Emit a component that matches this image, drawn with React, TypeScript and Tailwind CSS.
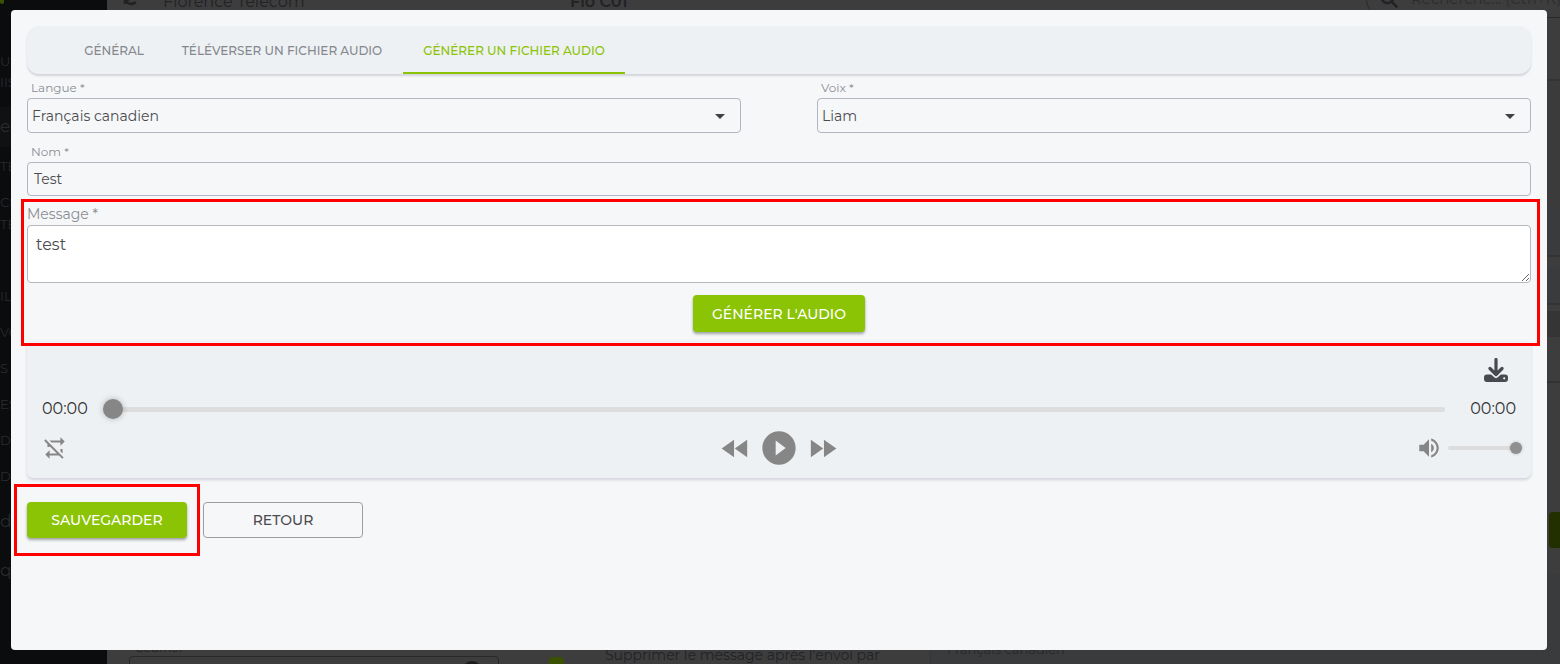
import React from "react";

const ICONS = {
  caret: "M7,10L12,15L17,10H7Z",
  repeatOff:
    "M2,5.27L3.28,4L20,20.72L18.73,22L15.73,19H7V22L3,18L7,14V17H13.73L7,10.27V11H5V8.27L2,5.27M17,13H19V17.18L17,15.18V13M17,5V2L21,6L17,10V7H8.82L6.82,5H17Z",
  rewind: "M11.5,12L20,18V6M11,18V6L2.5,12L11,18Z",
  forward: "M13,6V18L21.5,12M4,18L12.5,12L4,6V18Z",
  play: "M10,16.5V7.5L16,12M12,2A10,10 0 0,0 2,12A10,10 0 0,0 12,22A10,10 0 0,0 22,12C22,6.47 17.5,2 12,2Z",
  volume:
    "M14,3.23V5.29C16.89,6.15 19,8.83 19,12C19,15.17 16.89,17.84 14,18.7V20.77C18,19.86 21,16.28 21,12C21,7.72 18,4.14 14,3.23M16.5,12C16.5,10.23 15.5,8.71 14,7.97V16C15.5,15.29 16.5,13.76 16.5,12M3,9V15H7L12,20V4L7,9H3Z",
};

function Icon({ path, className }: { path: string; className: string }) {
  return (
    <svg viewBox="0 0 24 24" fill="currentColor" aria-hidden="true" className={className}>
      <path d={path} />
    </svg>
  );
}

function DownloadIcon() {
  return (
    <svg viewBox="0 0 24 24" aria-hidden="true" className="size-6">
      <path d="M12 1.5V16M6 10.5l6 6 6-6" fill="none" stroke="currentColor" strokeWidth="3.2" strokeLinecap="round" strokeLinejoin="round" />
      <path
        fillRule="evenodd"
        fill="currentColor"
        d="M3 16.6h4.2l2.7 2.5a3 3 0 0 0 4.2 0l2.7-2.5H21a3 3 0 0 1 3 3V21a3 3 0 0 1-3 3H3a3 3 0 0 1-3-3v-1.400a3 3 0 0 1 3-3ZM20.200 19.200a1.100 1.100 0 1 0 0 2.200a1.100 1.100 0 0 0 0-2.200Z"
      />
    </svg>
  );
}

const LABEL = "block h-5 px-1 text-xs leading-5 text-[#8b8d93]";

function SelectField({ id, label, value }: { id: string; label: string; value: string }) {
  return (
    <div>
      <label htmlFor={id} className={LABEL}>
        {label}
      </label>
      <div className="relative">
        <select
          id={id}
          defaultValue={value}
          className="block h-[35px] w-full appearance-none rounded border border-[#b4b5c2] bg-transparent pr-10 pl-1 text-sm text-[#4a4b4e]"
        >
          <option>{value}</option>
        </select>
        <Icon path={ICONS.caret} className="pointer-events-none absolute top-1.5 right-[9px] size-6 text-[#3f4144]" />
      </div>
    </div>
  );
}

const MENU = [
  { text: "U", style: "h-[18px] text-[13px]" },
  { text: "IIS", style: "h-6 text-[13px]" },
  { text: "eu", style: "mt-3 h-10 bg-[#0f1113] text-[17px]" },
  { text: "TE", style: "h-10 text-[13px]" },
  { text: "CE", style: "h-8 text-[13px]" },
  { text: "TE", style: "mb-12 h-3 text-[13px]" },
  { text: "IL", style: "h-9 text-[13px]" },
  { text: "VO", style: "h-9 text-[13px]" },
  { text: "S", style: "h-9 text-[13px]" },
  { text: "ES", style: "h-9 text-[13px]" },
  { text: "DI", style: "h-9 text-[13px]" },
  { text: "D'", style: "h-9 text-[13px]" },
  { text: "d", style: "h-[54px] text-[17px]" },
  { text: "qu", style: "h-11 text-[17px]" },
];

const BANDS = [
  "h-[17px]",
  "h-[62px] border-t border-[#2e2e2e]",
  "h-[128px] border-t-2 border-[#343434] bg-[#3b3b3b]",
  "h-[50px] border-b-2 border-[#323334] bg-[#3a3b3d]",
  "mt-2.5 h-[38px] border-b-2 border-[#323334] bg-[#3a3b3d]",
  "mt-1.5 h-[26px] bg-[#353535]",
  "h-[46px] border-b-2 border-[#323232]",
];

function Backdrop() {
  return (
    <div aria-hidden="true" className="flex h-full overflow-hidden bg-[#3d3d3d] text-[#212226]">
      <div className="w-[107px] shrink-0 bg-[#0a0c0e] text-[#292b2d]">
        <div className="h-[53px]">
          <span className="block h-1 w-1 rounded-b-full bg-[#3a5200]" />
        </div>
        {MENU.map((m, i) => (
          <div key={i} className={`flex items-center ${m.style}`}>
            {m.text}
          </div>
        ))}
      </div>
      <div className="relative flex min-w-0 flex-1 flex-col justify-between">
        <div className="absolute top-0 right-0 w-[13px]">
          {BANDS.map((band, i) => (
            <div key={i} className={band} />
          ))}
        </div>
        <div className="relative h-10">
          <svg viewBox="0 0 24 24" className="absolute -top-2.5 left-4 size-4" fill="none" stroke="currentColor" strokeWidth="4">
            <path d="M21 3v7h-7M3 21v-7h7M20 9A9 9 0 0 0 5 6M4 15a9 9 0 0 0 15 3" />
          </svg>
          <span className="absolute -top-2.5 left-14 text-base leading-6">Florence Télécom</span>
          <span className="absolute -top-2.5 left-[463px] text-base leading-6 font-semibold">Flo C01</span>
          <div className="absolute -top-5 -right-4 flex h-[38px] w-[210px] items-center gap-3 rounded-[19px] border border-[#2a2a2a] pl-3 text-[15px]">
            <svg viewBox="0 0 24 24" className="size-5 shrink-0" fill="none" stroke="currentColor" strokeWidth="3">
              <circle cx="10" cy="10" r="7" />
              <path d="M15 15l7 7" />
            </svg>
            <span className="whitespace-nowrap text-[#2b2c2f]">Recherche... (Ctrl+K)</span>
          </div>
        </div>
        <div className="relative h-[152px]">
          <div className="absolute top-0 right-0 h-9 w-[11px] rounded-l bg-[#223000]" />
          <div className="absolute right-0 bottom-0 h-[90px] w-[630px] border-l border-[#353535] bg-[#3a3b3d]" />
          <span className="absolute bottom-2 left-7 text-xs">Courriel</span>
          <div className="absolute -bottom-6 left-[22px] flex h-8 w-[370px] justify-end rounded border border-[#292929] pr-4">
            <span className="mt-1 size-5 rounded-full bg-[#1d1d1d]" />
          </div>
          <span className="absolute -bottom-2 left-[442px] size-[15px] rounded-sm bg-[#3a5200]" />
          <span className="absolute -bottom-px left-[498px] text-sm leading-5 whitespace-nowrap">
            Supprimer le message après l'envoi par
          </span>
          <span className="absolute bottom-[5px] left-[840px] text-[13px] leading-5 text-[#27282b]">Français canadien</span>
        </div>
      </div>
    </div>
  );
}

const GREEN_BUTTON =
  "rounded bg-[#8bc305] text-sm font-medium text-white shadow-[0_2px_3px_rgba(0,0,0,0.35)]";

const RANGE =
  "min-w-0 cursor-pointer appearance-none rounded-full bg-[#dddddd] [&::-webkit-slider-thumb]:appearance-none [&::-webkit-slider-thumb]:rounded-full";

export default function App() {
  return (
    <div className="relative h-screen overflow-hidden font-['Montserrat','Inter',sans-serif]">
      <Backdrop />
      <div className="absolute inset-0 flex pt-2.5 pr-[13px] pb-3.5 pl-[11px]">
        <main role="dialog" aria-label="Générer un fichier audio" className="min-w-0 flex-1 rounded bg-[#f6f7f9] p-4">
          <div role="tablist" className="flex h-12 rounded-xl bg-[#edf1f4] pl-10 text-xs font-medium text-[#85888c] shadow-[0_2px_2px_rgba(40,40,80,0.17)]">
            <button role="tab" aria-selected="false" className="w-[94px] border-b-2 border-transparent pt-1">GÉNÉRAL</button>
            <button role="tab" aria-selected="false" className="w-[242px] border-b-2 border-transparent pt-1">TÉLÉVERSER UN FICHIER AUDIO</button>
            <button role="tab" aria-selected="true" className="w-[222px] border-b-2 border-[#8bc305] pt-1 text-[#8bc305]">
              GÉNÉRER UN FICHIER AUDIO
            </button>
          </div>

          <div className="mt-1 grid grid-cols-2 gap-[76px]">
            <SelectField id="langue" label="Langue *" value="Français canadien" />
            <SelectField id="voix" label="Voix *" value="Liam" />
          </div>

          <label htmlFor="nom" className={`mt-[9px] ${LABEL}`}>
            Nom *
          </label>
          <input id="nom" defaultValue="Test" className="block h-[34px] w-full rounded border border-[#b4b5c2] bg-transparent px-1.5 text-sm text-[#4a4b4e]" />

          <section className="relative">
            <label htmlFor="message" className="block pt-2 pb-px text-sm leading-5 text-[#8b8d93]">
              Message *
            </label>
            <textarea id="message" defaultValue="test" className="block h-[58px] w-full resize rounded border border-[#b7b8bc] bg-white px-2 py-[7px] text-base text-[#4a4b4e]" />
            <div className="flex justify-center pt-3 pb-2">
              <button className={`h-[37px] w-[172px] ${GREEN_BUTTON}`}>GÉNÉRER L'AUDIO</button>
            </div>
            <div className="pointer-events-none absolute top-[3px] -right-[9px] -bottom-[6px] -left-1.5 z-10 border-3 border-[#ff0000]" />
          </section>

          <section aria-label="Lecteur audio" className="rounded-md border-t-[5px] border-[#f2f5f7] bg-[#edf1f4] px-[15px] pt-[13px] pb-2.5 text-[#868686] shadow-[0_2px_3px_rgba(40,40,80,0.17)]">
            <div className="flex justify-end pr-2">
              <button aria-label="Télécharger" className="text-[#474a4e]">
                <DownloadIcon />
              </button>
            </div>
            <div className="mt-3.5 flex h-[26px] items-center text-base text-[#333333]">
              <span className="w-[61px]">00:00</span>
              <input
                type="range"
                aria-label="Position"
                defaultValue={0}
                className={`h-[5px] flex-1 [&::-webkit-slider-thumb]:size-5 [&::-webkit-slider-thumb]:bg-[#868686] [&::-webkit-slider-thumb]:shadow-[0_0_6px_rgba(0,0,0,0.25)] ${RANGE}`}
              />
              <span className="w-[71px] text-right">00:00</span>
            </div>
            <div className="mt-1.5 grid h-10 grid-cols-3 items-center">
              <button aria-label="Répéter" className="justify-self-start">
                <Icon path={ICONS.repeatOff} className="size-[26px]" />
              </button>
              <div className="flex items-center justify-center gap-1.5">
                <button aria-label="Reculer"><Icon path={ICONS.rewind} className="size-[35px]" /></button>
                <button aria-label="Lire"><Icon path={ICONS.play} className="size-10" /></button>
                <button aria-label="Avancer"><Icon path={ICONS.forward} className="size-[35px]" /></button>
              </div>
              <div className="-mr-1.5 flex items-center justify-end gap-1.5">
                <button aria-label="Muet"><Icon path={ICONS.volume} className="size-[26px]" /></button>
                <input
                  type="range"
                  aria-label="Volume"
                  defaultValue={100}
                  className={`h-1 w-[74px] [&::-webkit-slider-thumb]:size-3 [&::-webkit-slider-thumb]:bg-[#8f8f8f] [&::-webkit-slider-thumb]:shadow-[0_0_3px_rgba(0,0,0,0.25)] ${RANGE}`}
                />
              </div>
            </div>
          </section>

          <div className="mt-6 flex gap-4">
            <div className="relative">
              <button className={`block h-9 w-40 ${GREEN_BUTTON}`}>SAUVEGARDER</button>
              <div className="pointer-events-none absolute -inset-x-[13px] -inset-y-[18px] border-3 border-[#ff0000]" />
            </div>
            <button className="h-9 w-40 rounded border border-[#9c9da1] text-sm font-medium text-[#4a4b4e]">RETOUR</button>
          </div>
        </main>
      </div>
    </div>
  );
}
